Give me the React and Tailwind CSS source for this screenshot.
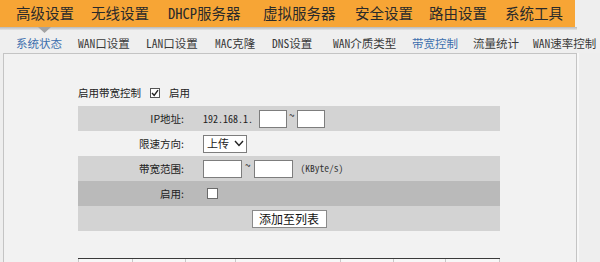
import React from 'react';

const mono = { fontFamily: '"Noto Sans Mono CJK SC", "Liberation Mono", "Noto Sans CJK SC", monospace' };

const topMenu = ['高级设置', '无线设置', 'DHCP服务器', '虚拟服务器', '安全设置', '路由设置', '系统工具'];
const topLeft = [16, 91, 168, 263, 355, 429, 505];

const subMenu = [
  { label: '系统状态', x: 16, active: true },
  { label: 'WAN口设置', x: 78 },
  { label: 'LAN口设置', x: 146 },
  { label: 'MAC克隆', x: 215 },
  { label: 'DNS设置', x: 272 },
  { label: 'WAN介质类型', x: 333 },
  { label: '带宽控制', x: 412, active: true },
  { label: '流量统计', x: 473 },
  { label: 'WAN速率控制', x: 533 },
];

const Box = ({ w }) => (
  <span className={`inline-block h-[18px] bg-white border border-[#7d7d7d] ${w}`} />
);

const Row = ({ label, bg, children, center }) => (
  <div className={`flex h-[25px] items-center ${bg}`}>
    {center ? (
      <div className="flex-1 flex justify-center">{children}</div>
    ) : (
      <>
        <div className="w-[112px] text-right pr-[6px] text-[10.5px] text-[#222222]">{label}</div>
        <div className="flex-1 flex items-center pl-[13px]">{children}</div>
      </>
    )}
  </div>
);

export default function App() {
  return (
    <div
      className="w-[600px] h-[262px] overflow-hidden bg-[#eeeeee] relative text-[#222222]"
      style={{ fontFamily: '"Noto Sans CJK SC", sans-serif' }}
    >
      {/* top menu */}
      <div className="w-[575px] h-[27px] bg-[#f7a535] relative">
        {topMenu.map((t, i) => (
          <span
            key={t}
            className="absolute top-[4px] text-[14.5px] leading-[18px] text-[#2a2a2a]"
            style={{ left: topLeft[i], ...mono }}
          >
            {t}
          </span>
        ))}
      </div>
      <div className="w-[577px] h-[3px] bg-gradient-to-b from-[#b9b9b9] to-[#e4e4e4]" />

      {/* sub menu */}
      <div className="h-[23px] relative bg-[#efefef]">
        <svg className="absolute left-[38px] top-[-3px]" width="13" height="6" viewBox="0 0 13 6">
          <polygon points="0,0 13,0 6.5,6" fill="#a3a3a3" />
        </svg>
        {subMenu.map((s) => (
          <span
            key={s.label}
            className={`absolute top-[6px] whitespace-nowrap text-[11.5px] leading-[14px] ${s.active ? 'text-[#3d6fae]' : 'text-[#3a3a3a]'}`}
            style={{ left: s.x, ...mono }}
          >
            {s.label}
          </span>
        ))}
      </div>

      {/* content panel */}
      <div className="flex">
        <div className="ml-[3px] w-[574px] h-[210px] border-l border-t border-r border-[#c4c4c4] bg-[#f2f2f2] pl-[74px]">
          <div className="flex items-center h-[52px] pt-[25px] text-[10.5px] text-[#222222]">
            <span>启用带宽控制</span>
            <span className="ml-[9px] w-[10px] h-[10px] border border-[#555555] bg-white flex items-center justify-center">
              <svg width="8" height="8" viewBox="0 0 8 8">
                <path d="M1 4 L3.2 6.3 L7 1.2" stroke="#222" strokeWidth="1.4" fill="none" />
              </svg>
            </span>
            <span className="ml-[9px]">启用</span>
          </div>

          <div className="w-[422px]">
            <Row label="IP地址:" bg="bg-[#d3d3d3]">
              <span className="text-[10px] text-[#222222] mr-[6px]" style={mono}>192.168.1.</span>
              <Box w="w-[28px]" />
              <span className="text-[10px] mx-[2px] -mt-[8px]">~</span>
              <Box w="w-[28px]" />
            </Row>
            <Row label="限速方向:" bg="">
              <span className="h-[18px] w-[44px] bg-white border border-[#7d7d7d] flex items-center pl-[3px] text-[11px] text-[#222222]">
                上传
                <svg className="ml-[5px]" width="10" height="7" viewBox="0 0 10 7">
                  <path d="M1 1 L5 5.5 L9 1" stroke="#222" strokeWidth="1.4" fill="none" />
                </svg>
              </span>
            </Row>
            <Row label="带宽范围:" bg="bg-[#d3d3d3]">
              <Box w="w-[39px]" />
              <span className="text-[10px] mx-[3px] -mt-[8px]">~</span>
              <Box w="w-[39px]" />
              <span className="ml-[8px] text-[9.5px] text-[#333333]" style={mono}>(KByte/s)</span>
            </Row>
            <Row label="启用:" bg="bg-[#bababa]">
              <span className="ml-[4px] w-[11px] h-[11px] bg-white border border-[#6a6a6a]" />
            </Row>
            <Row bg="bg-[#d3d3d3]" center>
              <button className="h-[18px] w-[75px] bg-white border border-[#8a8a8a] text-[12px] leading-[16px] text-[#111111]">
                添加至列表
              </button>
            </Row>
          </div>

          <div className="mt-[27px] w-[422px] flex h-[10px] border-t border-[#3a3a3a] bg-[#f7f7f7]">
            {[54, 53, 50, 105, 53, 52, 55].map((w, i) => (
              <div key={i} className="border-l border-[#c8c8c8] last:border-r" style={{ width: w }} />
            ))}
          </div>
        </div>
        <div className="w-[2px] h-[210px] bg-[#f7f7f7]" />
      </div>
    </div>
  );
}
